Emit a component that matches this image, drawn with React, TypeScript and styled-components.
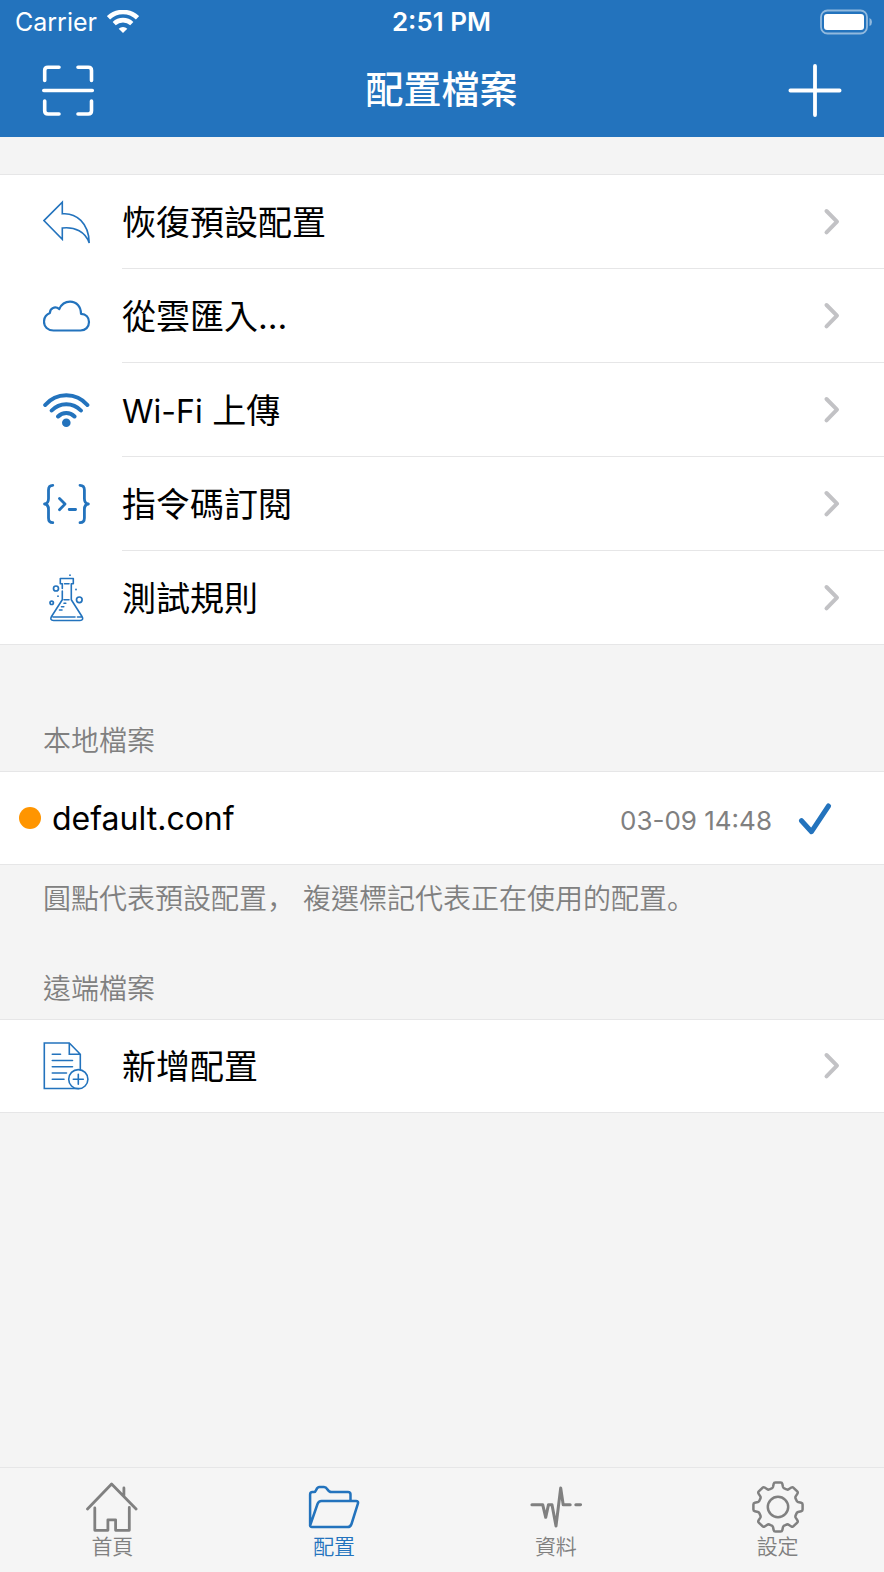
import React from "react";
import styled, { createGlobalStyle } from "styled-components";

const BLUE = "#2373bd";
const GREY = "#808080";
const LINE = "#e6e6e7";

const GlobalStyle = createGlobalStyle`
  * { box-sizing: border-box; }
  body {
    margin: 0;
    background: #f4f4f4;
    font-family: Inter, "Noto Sans CJK TC", sans-serif;
    color: #000;
  }
  button { font: inherit; color: inherit; border: 0; background: none; padding: 0; cursor: pointer; }
  svg { display: block; flex: none; fill: none; stroke: currentColor; stroke-linecap: round; stroke-linejoin: round; }
`;

const Screen = styled.div`
  display: flex;
  flex-direction: column;
  min-height: 100vh;
`;

const Header = styled.header`
  background: ${BLUE};
  color: #fff;
`;

const StatusBar = styled.div`
  display: grid;
  grid-template-columns: 1fr auto 1fr;
  align-items: center;
  height: 44px;
  padding: 0 12px 0 11px;
  font-size: 26px;
  line-height: 44px;
`;

const Carrier = styled.div`
  display: flex;
  align-items: center;
  gap: 10px;
  padding-left: 4px;
  font-size: 25px;
`;

const Clock = styled.time`
  font-weight: 600;
`;

const Battery = styled.div`
  display: flex;
  justify-content: flex-end;
`;

const NavBar = styled.div`
  display: flex;
  align-items: center;
  justify-content: space-between;
  height: 93px;
  padding: 0 42px 0 41px;
`;

const Title = styled.h1`
  margin: 0;
  padding-bottom: 4px;
  font-size: 38px;
  line-height: 48px;
  font-weight: 500;
`;

const Main = styled.main`
  flex: 1;
  padding-top: 37px;
`;

const Group = styled.ul`
  list-style: none;
  margin: 0;
  padding: 0;
  background: #fff;
  border: solid ${LINE};
  border-width: 1px 0;
`;

const Row = styled.button<{ $marked?: boolean }>`
  display: flex;
  align-items: center;
  width: 100%;
  height: 93px;
  padding: 0 44px 0 ${(p) => (p.$marked ? 19 : 43)}px;
  gap: ${(p) => (p.$marked ? 11 : 31)}px;
  font-size: 34px;
  line-height: 48px;
  text-align: left;
`;

const Item = styled.li`
  &:not(:last-child)::after {
    content: "";
    display: block;
    height: 1px;
    margin-left: 122px;
    background: ${LINE};
  }
  &:only-child ${Row} {
    height: 92px;
  }
`;

const RowIcon = styled.span`
  color: ${BLUE};
`;

const RowLabel = styled.span`
  flex: 1;
  padding-top: 2px;
`;

const Latin = styled.span`
  font-size: 32px;
  line-height: 40px;
`;

const FileInfo = styled.span`
  flex: 1;
  display: flex;
  align-items: baseline;
  justify-content: space-between;
  padding-top: 6px;
`;

const Chevron = styled.span`
  color: #c2c2c5;
`;

const Dot = styled.span`
  width: 22px;
  height: 22px;
  border-radius: 50%;
  background: #ff9500;
`;

const Stamp = styled.time`
  margin-right: 15px;
  font-size: 26px;
  color: ${GREY};
`;

const Check = styled.span`
  margin-right: 8px;
  color: ${BLUE};
`;

const SectionTitle = styled.h2<{ $first?: boolean }>`
  margin: 0;
  padding: ${(p) => (p.$first ? 76 : 50)}px 43px 10px;
  font-size: 28px;
  line-height: 40px;
  font-weight: 350;
  color: ${GREY};
`;

const Note = styled.p`
  margin: 0;
  padding: 14px 43px 0;
  font-size: 28px;
  line-height: 40px;
  font-weight: 350;
  color: ${GREY};
`;

const Punctuation = styled.span`
  font-family: "Noto Sans CJK SC", sans-serif;
  line-height: 28px;
`;

const TabBar = styled.nav`
  position: sticky;
  bottom: 0;
  display: grid;
  grid-template-columns: repeat(4, 1fr);
  gap: 9px;
  padding: 13px 0 12px 6px;
  border-top: 1px solid ${LINE};
  background: #f5f5f5;
`;

const Tab = styled.a<{ $active?: boolean }>`
  display: flex;
  flex-direction: column;
  align-items: center;
  gap: 1px;
  color: ${(p) => (p.$active ? BLUE : GREY)};
  font-size: 21px;
  line-height: 26px;
  font-weight: 350;
  text-decoration: none;
`;

const gearOutline = (() => {
  const parts: string[] = [];
  for (let k = 0; k < 8; k++) {
    const a = (k * Math.PI) / 4;
    const at = (x: number, y: number) =>
      `${(26 + x * Math.cos(a) - y * Math.sin(a)).toFixed(2)} ${(26 + x * Math.sin(a) + y * Math.cos(a)).toFixed(2)}`;
    parts.push(
      `${k ? "L" : "M"}${at(-7.2, -18.2)}Q${at(-5.4, -18.6)} ${at(-5, -20)}L${at(-4.3, -23.2)}Q${at(-4, -24.6)} ${at(-2.6, -24.6)}` +
        `L${at(2.6, -24.6)}Q${at(4, -24.6)} ${at(4.3, -23.2)}L${at(5, -20)}Q${at(5.4, -18.6)} ${at(7.2, -18.2)}`
    );
  }
  return parts.join("") + "Z";
})();

const rowArt = {
  restore: (
    <path
      strokeWidth="1.6"
      strokeLinejoin="miter"
      d="M.9 22.6 19.3 4.2V15.8C33 14.5 46 25 46.2 45C42.5 34 32 28.5 19.3 30V41.2Z"
    />
  ),
  cloud: (
    <path
      strokeWidth="2.2"
      d="M10.5 38.5C4.800 38.5 1 34.800 1 29.800C1 25.500 3.500 22.500 6.900 21C7 16 12 13.800 16.300 17C18.500 12 22.500 9.600 27 9.600C33.500 9.600 38 14.500 38 21.800C43 22 46 25.500 46 30C46 35 42.500 38.500 37.500 38.500Z"
    />
  ),
  wifi: (
    <>
      <path strokeWidth="4" d="M2.200 19A27.500 27.500 0 0 1 44.400 19M8.700 24.500A20 20 0 0 1 37.900 24.500M15.100 30.500A11.500 11.500 0 0 1 31.500 30.500" />
      <circle cx="23.3" cy="36.800" r="4.300" fill="currentColor" stroke="none" />
    </>
  ),
  script: (
    <path
      strokeWidth="2.8"
      d="M9.800 5.300C6.500 5.300 5.500 7 5.500 10V18.500C5.500 22 4 23.800 1.500 24C4 24.200 5.500 26 5.500 29.500V38C5.500 41 6.500 42.700 9.800 42.700M37 5.300C40.300 5.300 41.400 7 41.400 10V18.500C41.400 22 43 23.800 45.400 24C43 24.200 41.400 26 41.400 29.500V38C41.400 41 40.300 42.700 37 42.700M16.500 18.500L22 24.100 16.500 29.800M26.200 29.500H32.600"
    />
  ),
  flask: (
    <>
      <path
        strokeWidth="1.6"
        d="M17.300 4.500H30.300V9.800H28.300V25.800L39 42.500C40.500 45 39.500 46.500 37 46.500H10.500C8 46.500 7 45 8.500 42.500L19.300 25.800V17M19.300 14.500V9.800H17.300V4.500M21.500 9.800H26M21 25.800H26M10 43H32M34.500 43H38M21 29.200H22.800M18.500 32.700H20.800M16.500 36H19"
      />
      <g strokeWidth="1.700">
        <circle cx="13" cy="14.500" r="2.500" />
        <circle cx="8.700" cy="28.800" r="1.700" />
        <circle cx="36.300" cy="25.800" r="2.800" />
      </g>
      <g fill="currentColor" stroke="none">
        <circle cx="27" cy="1.200" r=".9" />
        <circle cx="33" cy="15.500" r=".9" />
        <circle cx="15" cy="22.200" r=".9" />
      </g>
    </>
  ),
  document: (
    <g strokeWidth="1.600" strokeLinejoin="miter">
      <path d="M37.300 27.500V12.300L26.300 1H1.300V46.500H36M26.300 1V12.300H37.300M9.300 12.300H17.500M9.300 18.500H29.500M9.300 24.700H29.500M9.300 31H23.500M9.300 37.300H21" />
      <circle cx="35.300" cy="37.200" r="9.600" />
      <path d="M30.300 37.200H40.300M35.300 32.200V42.200" />
    </g>
  ),
};

const tabArt = {
  home: (
    <path
      strokeWidth="2.800"
      d="M1.500 28 25.600 3 50.100 28M37.900 7V14.500M8.800 27V49.300H21.900V38.800H29.600V49.300H43.300V26.500"
    />
  ),
  folder: (
    <path
      strokeWidth="2.500"
      d="M2.100 44V13.500Q2.100 11 4.500 11H6Q7.500 11 8.300 8.800Q9.300 6 11.500 6H16Q18 6 19.500 8.500T23.500 11H40Q42.500 11 42.500 13.500V19.800M2.100 44.500 9.500 23Q10.500 20 13.500 20H48Q50.700 20 49.900 22.700L43.500 43Q42.500 46 39.500 46H4Q1.900 46 2.100 44"
    />
  ),
  pulse: (
    <path
      strokeWidth="3"
      d="M1.900 23.700H12.700L15.700 36.300 18.500 23.700H22L26 45 30.700 7 33.200 23.700H40.200M45.800 23.700H50.600"
    />
  ),
  gear: (
    <g strokeWidth="2.500">
      <path d={gearOutline} />
      <circle cx="26" cy="26" r="10.200" />
    </g>
  ),
};

const actions: { icon: keyof typeof rowArt; label: React.ReactNode }[] = [
  { icon: "restore", label: "恢復預設配置" },
  { icon: "cloud", label: "從雲匯入..." },
  { icon: "wifi", label: <><Latin>Wi-Fi</Latin> 上傳</> },
  { icon: "script", label: "指令碼訂閱" },
  { icon: "flask", label: "測試規則" },
];

const tabs: { icon: keyof typeof tabArt; label: string; active?: boolean }[] = [
  { icon: "home", label: "首頁" },
  { icon: "folder", label: "配置", active: true },
  { icon: "pulse", label: "資料" },
  { icon: "gear", label: "設定" },
];

function LinkRow({ icon, label }: { icon: keyof typeof rowArt; label: React.ReactNode }) {
  return (
    <Item>
      <Row type="button">
        <RowIcon>
          <svg width="48" height="48" viewBox="0 0 48 48" aria-hidden="true">{rowArt[icon]}</svg>
        </RowIcon>
        <RowLabel>{label}</RowLabel>
        <Chevron>
          <svg width="17" height="28" viewBox="0 0 17 28" strokeWidth="4" aria-hidden="true">
            <path d="M3.500 3 14 13.700 3.500 24.300" />
          </svg>
        </Chevron>
      </Row>
    </Item>
  );
}

export default function App() {
  return (
    <Screen lang="zh-Hant">
      <GlobalStyle />
      <Header>
        <StatusBar>
          <Carrier>
            Carrier
            <svg width="32" height="24" viewBox="0 0 32 24" aria-hidden="true">
              <g strokeWidth="4.600" strokeLinecap="butt">
                <path d="M1.500 7.800A21 21 0 0 1 30.500 7.800" />
                <path d="M7.200 13.600A12.900 12.900 0 0 1 24.800 13.600" />
              </g>
              <path d="M16 23 11.700 18.700A6 6 0 0 1 20.300 18.700Z" fill="currentColor" stroke="none" />
            </svg>
          </Carrier>
          <Clock>2:51 PM</Clock>
          <Battery>
            <svg width="52" height="26" viewBox="0 0 52 26" aria-hidden="true">
              <rect x="1" y="1.500" width="46" height="23" rx="6.500" strokeWidth="1.800" opacity=".5" />
              <rect x="4" y="5" width="40" height="16" rx="3" fill="currentColor" stroke="none" />
              <path d="M49.500 9Q52 10 52 13T49.500 17Z" fill="currentColor" stroke="none" opacity=".5" />
            </svg>
          </Battery>
        </StatusBar>
        <NavBar>
          <button type="button" aria-label="掃描">
            <svg width="54" height="54" viewBox="0 0 54 54" strokeWidth="3.600" aria-hidden="true">
              <path d="M18 3.300H7Q3.700 3.300 3.700 6.500V16.500M37 3.300H47.300Q50.500 3.300 50.500 6.500V16.500M3.700 37V46.800Q3.700 50 7 50H18M37 50H47.300Q50.500 50 50.500 46.800V37M2.800 26.500H51.300" />
            </svg>
          </button>
          <Title>配置檔案</Title>
          <button type="button" aria-label="新增">
            <svg width="54" height="54" viewBox="0 0 54 54" strokeWidth="3.800" aria-hidden="true">
              <path d="M27 2V51M2.400 26.500H51.600" />
            </svg>
          </button>
        </NavBar>
      </Header>

      <Main>
        <Group>
          {actions.map((a) => (
            <LinkRow key={a.icon} {...a} />
          ))}
        </Group>

        <SectionTitle $first>本地檔案</SectionTitle>
        <Group>
          <Item>
            <Row type="button" $marked>
              <Dot />
              <FileInfo>
                <Latin>default.conf</Latin>
                <Stamp>03-09 14:48</Stamp>
              </FileInfo>
              <Check>
                <svg width="34" height="34" viewBox="0 0 34 34" strokeWidth="5" aria-hidden="true">
                  <path d="M3.500 19.700 13.500 30.700 30.500 5" />
                </svg>
              </Check>
            </Row>
          </Item>
        </Group>
        <Note>
          圓點代表預設配置<Punctuation lang="zh-Hans">，</Punctuation> 複選標記代表正在使用的配置
          <Punctuation lang="zh-Hans">。</Punctuation>
        </Note>

        <SectionTitle>遠端檔案</SectionTitle>
        <Group>
          <LinkRow icon="document" label="新增配置" />
        </Group>
      </Main>

      <TabBar>
        {tabs.map((t) => (
          <Tab key={t.icon} href={`#${t.icon}`} $active={t.active} aria-current={t.active ? "page" : undefined}>
            <svg width="52" height="52" viewBox="0 0 52 52" aria-hidden="true">{tabArt[t.icon]}</svg>
            {t.label}
          </Tab>
        ))}
      </TabBar>
    </Screen>
  );
}
